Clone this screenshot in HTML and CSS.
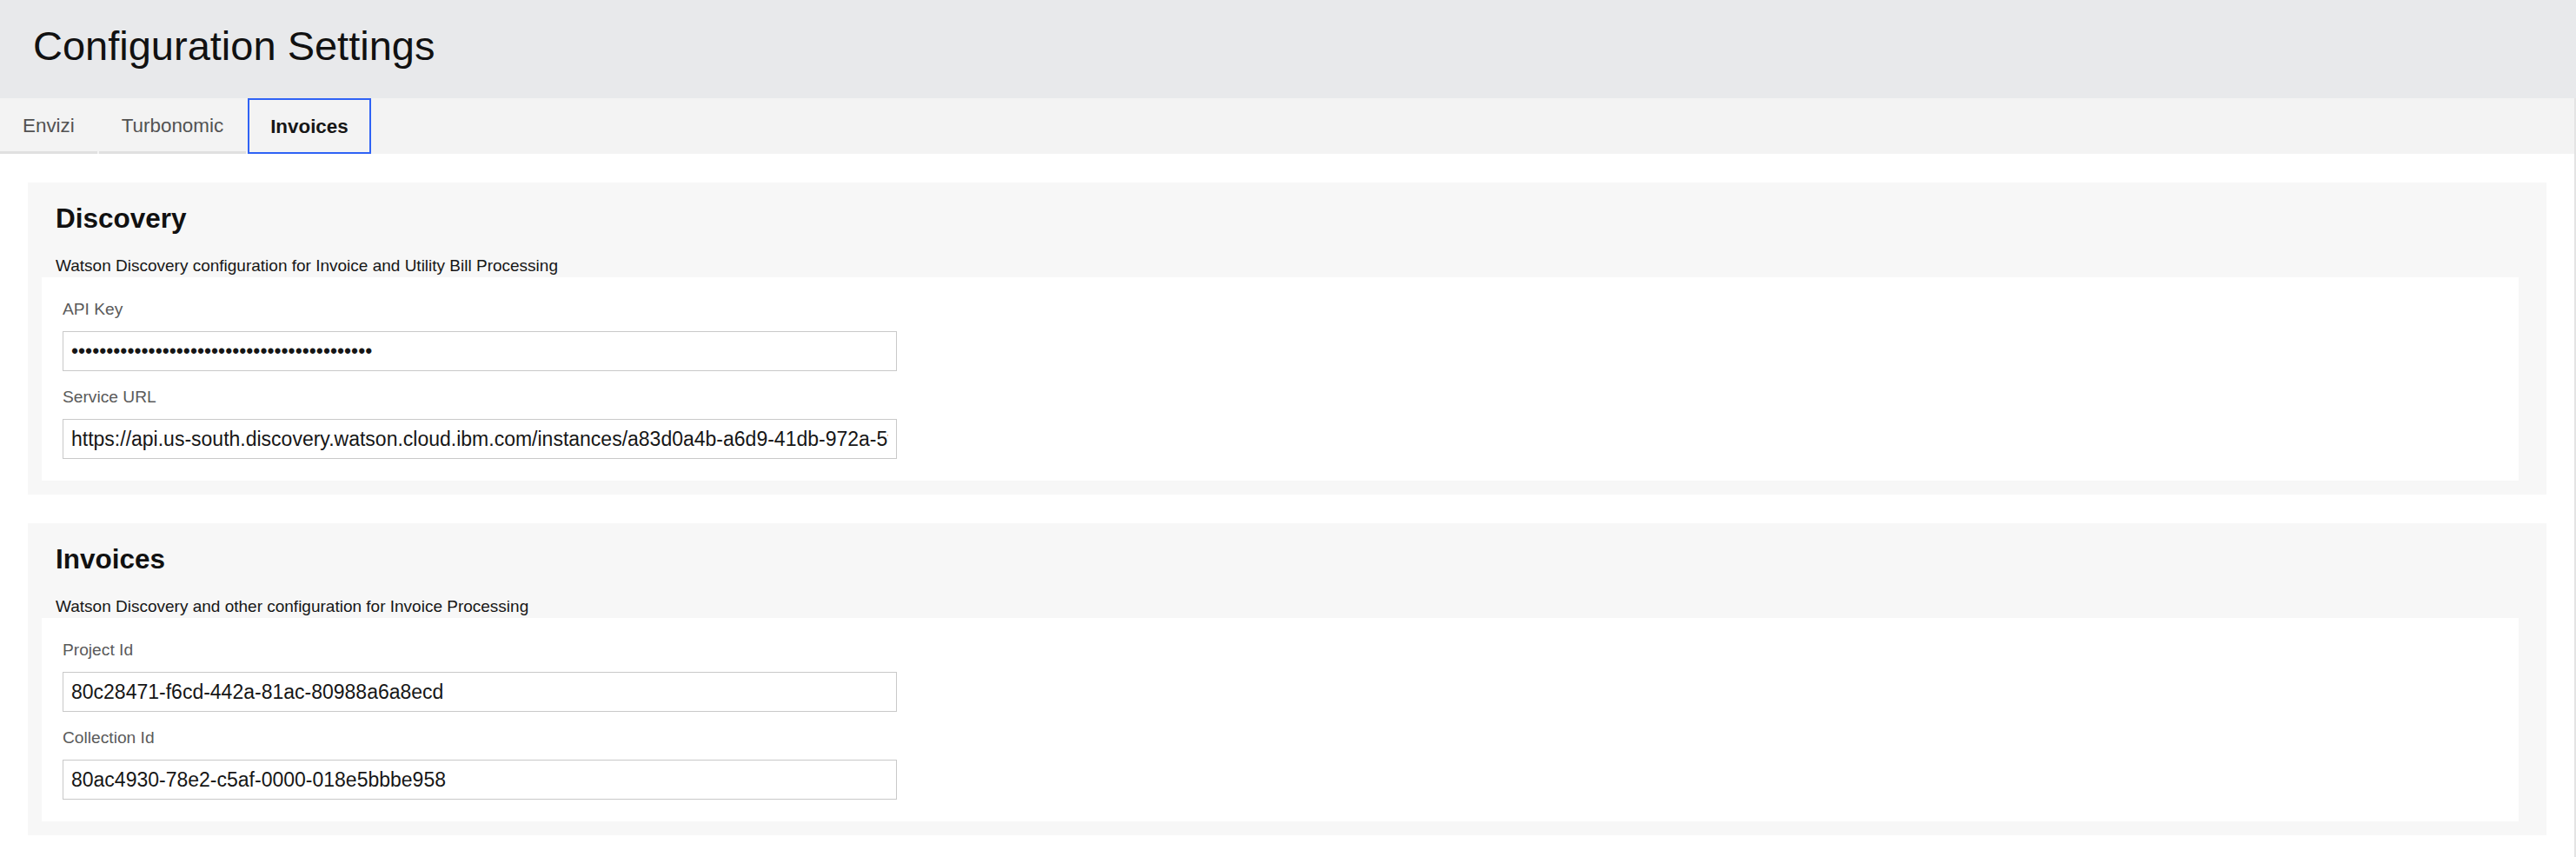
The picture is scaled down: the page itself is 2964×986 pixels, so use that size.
FILE: index.html
```html
<!DOCTYPE html>
<html lang="en">
<head>
<meta charset="utf-8">
<title>Configuration Settings</title>
<link rel="stylesheet" href="styles.css">
</head>
<body>
<header class="page-header">
  <h1 class="page-title">Configuration Settings</h1>
</header>
<div class="page-body">
  <nav class="tabs">
    <div class="tab">Envizi</div>
    <div class="tab">Turbonomic</div>
    <div class="tab tab-selected">Invoices</div>
  </nav>
  <main class="content">
    <section class="tile">
      <div class="tile-head">
        <h2 class="tile-title">Discovery</h2>
        <p class="tile-desc">Watson Discovery configuration for Invoice and Utility Bill Processing</p>
      </div>
      <div class="tile-body">
        <div class="field">
          <label class="field-label" for="apikey">API Key</label>
          <input class="field-input" id="apikey" type="password" value="xxxxxxxxxxxxxxxxxxxxxxxxxxxxxxxxxxxxxxxxxxx">
        </div>
        <div class="field">
          <label class="field-label" for="surl">Service URL</label>
          <input class="field-input" id="surl" type="text" value="https://api.us-south.discovery.watson.cloud.ibm.com/instances/a83d0a4b-a6d9-41db-972a-5f2c4e1b7d90">
        </div>
      </div>
    </section>
    <section class="tile">
      <div class="tile-head">
        <h2 class="tile-title">Invoices</h2>
        <p class="tile-desc">Watson Discovery and other configuration for Invoice Processing</p>
      </div>
      <div class="tile-body">
        <div class="field">
          <label class="field-label" for="pid">Project Id</label>
          <input class="field-input" id="pid" type="text" value="80c28471-f6cd-442a-81ac-80988a6a8ecd">
        </div>
        <div class="field">
          <label class="field-label" for="cid">Collection Id</label>
          <input class="field-input" id="cid" type="text" value="80ac4930-78e2-c5af-0000-018e5bbbe958">
        </div>
      </div>
    </section>
  </main>
</div>
</body>
</html>
```

FILE: styles.css
```css
* {
  box-sizing: border-box;
}

html, body {
  margin: 0;
  padding: 0;
  background: #ffffff;
}

body {
  font-family: "Liberation Sans", Arial, Helvetica, sans-serif;
  color: #161616;
}

.page-header {
  background: #e8e9eb;
  height: 113px;
  padding: 25px 0 0 38px;
}

.page-title {
  margin: 0;
  font-size: 47px;
  line-height: 56px;
  font-weight: 400;
  color: #111111;
}

.page-body {
  border-right: 2px solid #e4e4e4;
  min-height: calc(100vh - 113px);
}

.tabs {
  display: flex;
  gap: 2px;
  background: #f3f3f3;
  height: 64px;
}

.tab {
  height: 64px;
  padding: 20px 26px 0;
  font-size: 22.4px;
  line-height: 24px;
  color: #525252;
  border-bottom: 3px solid #e0e0e0;
}

.tab-selected {
  border: 2px solid #2f62f5;
  padding: 19px 24px 0;
  font-weight: 700;
  color: #161616;
}

.content {
  padding: 33px 32px 26px 32px;
  display: flex;
  flex-direction: column;
  gap: 33px;
}

.tile {
  background: #f7f7f7;
  padding: 0 32px 16px 16px;
}

.tile-head {
  padding: 21px 0 0 16px;
  height: 109px;
}

.tile-title {
  margin: 0;
  font-size: 31.5px;
  line-height: 40px;
  font-weight: 700;
  color: #111111;
}

.tile-desc {
  margin: 23px 0 0;
  font-size: 19px;
  line-height: 24px;
  color: #161616;
}

.tile-body {
  background: #ffffff;
  padding: 25px 0 25px 24px;
  display: flex;
  flex-direction: column;
  gap: 18px;
}

.field {
  display: flex;
  flex-direction: column;
  gap: 13px;
}

.field-label {
  font-size: 19.2px;
  line-height: 24px;
  color: #5a5a5a;
}

.field-input {
  width: 960px;
  height: 46px;
  border: 1px solid #c9c9c9;
  border-radius: 0;
  background: #ffffff;
  padding: 0 9px;
  font-family: "Liberation Sans", Arial, Helvetica, sans-serif;
  font-size: 23px;
  color: #161616;
  outline: none;
}
```
